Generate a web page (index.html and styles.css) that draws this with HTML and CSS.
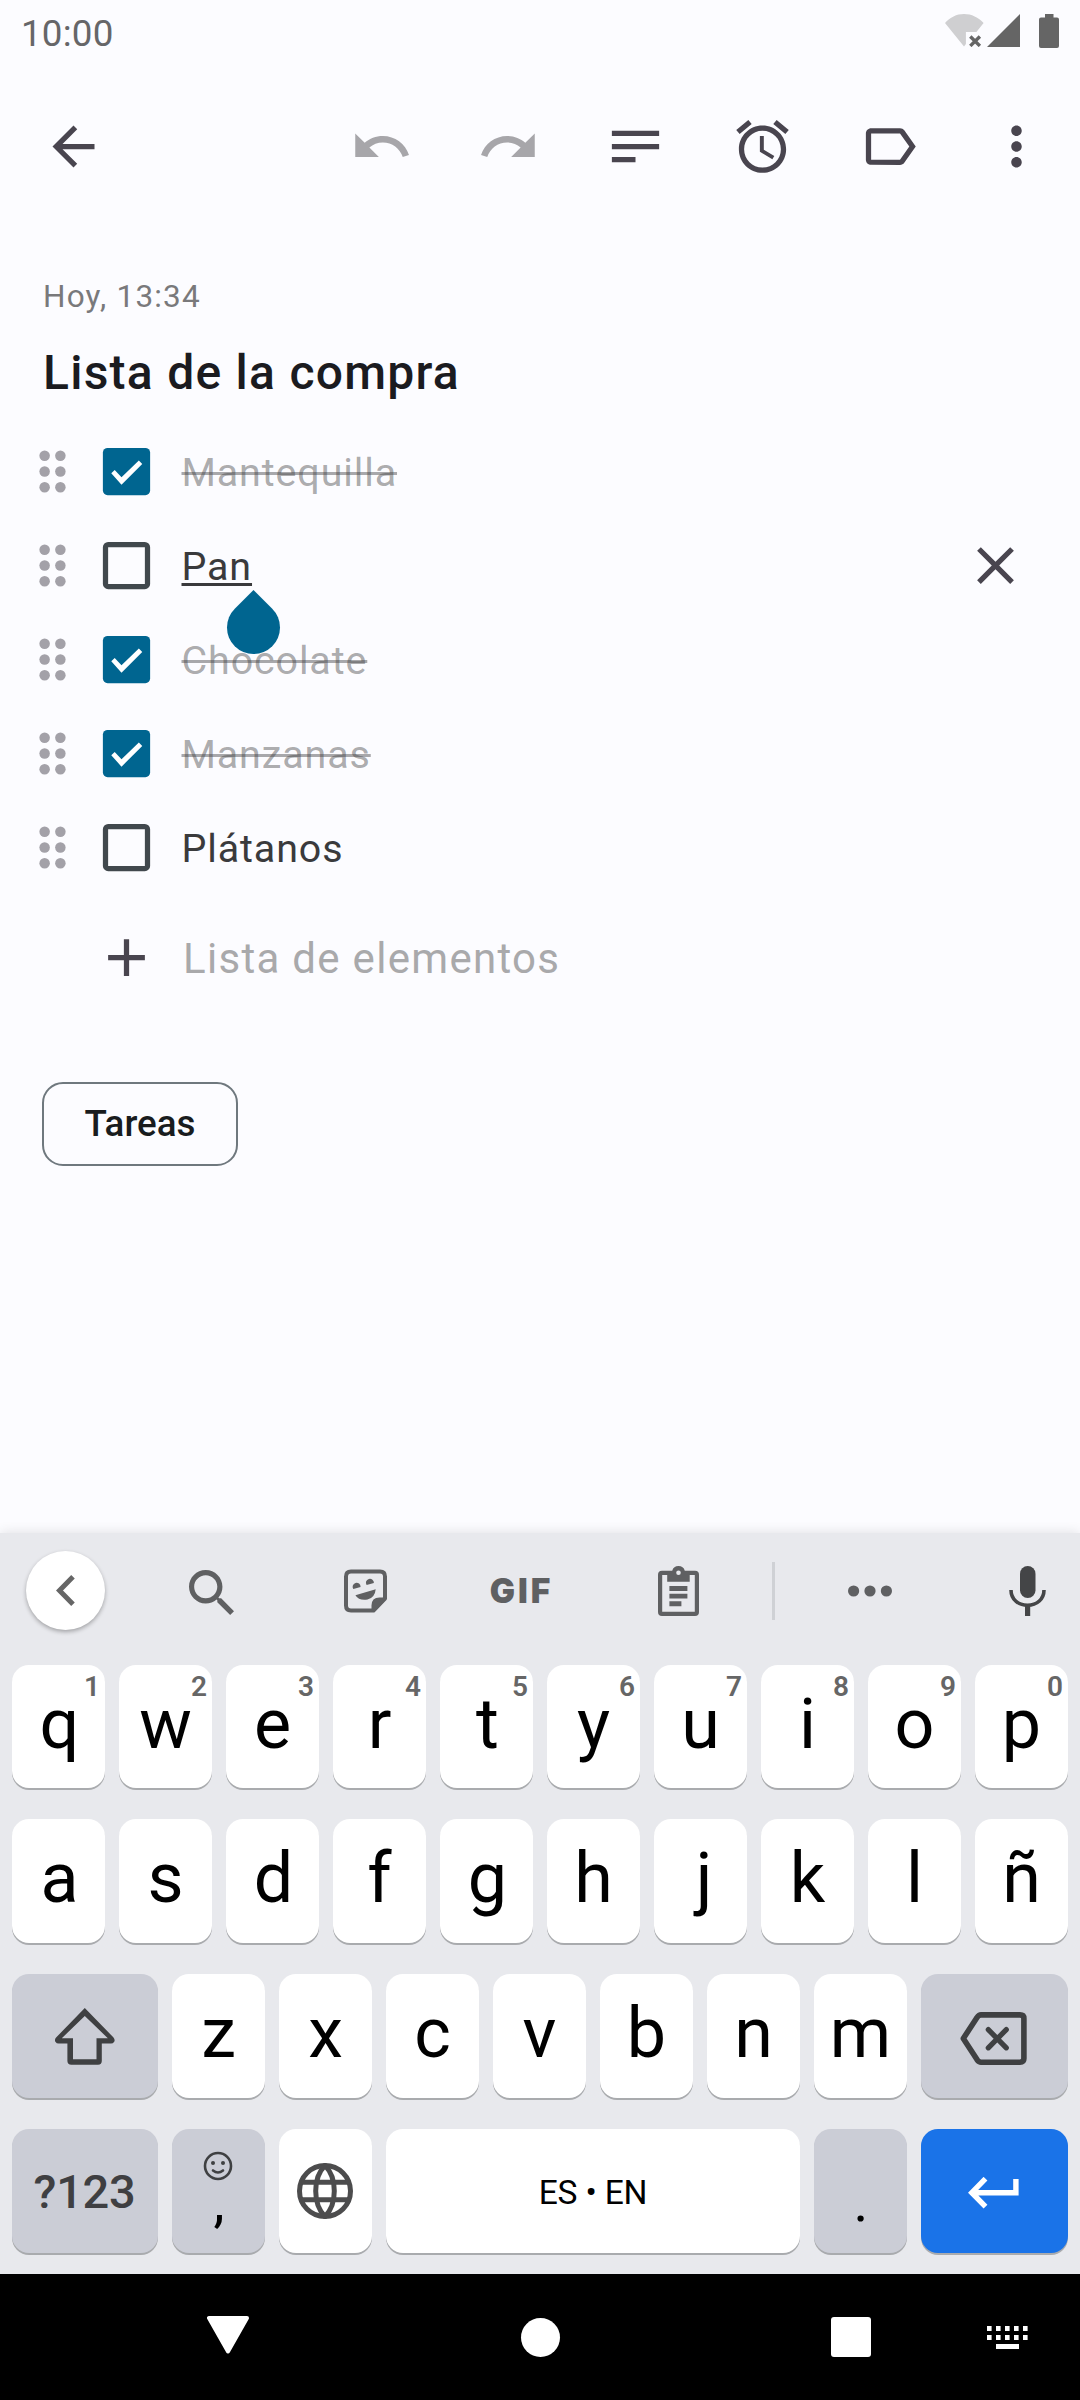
FILE: index.html
```html
<!DOCTYPE html>
<html lang="es">
<head>
<meta charset="utf-8">
<title>Lista de la compra</title>
<link rel="stylesheet" href="styles.css">
</head>
<body>
<svg class="defs" width="0" height="0">
  <symbol id="drag" viewBox="0 0 24 24"><circle cx="9" cy="6" r="2"/><circle cx="15" cy="6" r="2"/><circle cx="9" cy="12" r="2"/><circle cx="15" cy="12" r="2"/><circle cx="9" cy="18" r="2"/><circle cx="15" cy="18" r="2"/></symbol>
  <symbol id="box-on" viewBox="0 0 24 24"><rect x="3" y="3" width="18" height="18" rx="1.8" fill="#006590"/><path fill="#fff" d="M6.2 12.7 7.5 11.4 10.1 14.2 16.7 7.85 18 9.1 10.1 17Z"/></symbol>
  <symbol id="box-off" viewBox="0 0 24 24"><rect x="4" y="4" width="16" height="16" rx="1" fill="none" stroke="#41484d" stroke-width="2"/></symbol>
</svg>
<div class="screen">
  <header class="status">
    <span class="clock">10:00</span>
    <div class="status-icons">
      <svg class="wifi" width="39" height="33" viewBox="0 0 39 33"><path fill="#cfcfd1" d="M19 0C11.5 0 5 3.4 0 9L19 32.6 20.9 30V18H31.4L38.6 9C33.5 3.4 26.5 0 19 0Z"/><path stroke="#656565" stroke-width="3.4" d="M25.3 22.5l9.6 9.4m0-9.4l-9.6 9.4"/></svg>
      <svg class="signal" width="33" height="33" viewBox="0 0 33 33"><path fill="#656565" d="M33 0V33H0Z"/></svg>
      <svg class="battery" width="20" height="34" viewBox="0 0 20 34"><path fill="#656565" d="M6 0h8.500v3.400H18a2 2 0 0 1 2 2V32a2 2 0 0 1-2 2H2a2 2 0 0 1-2-2V5.400a2 2 0 0 1 2-2h4Z"/></svg>
    </div>
  </header>

  <nav class="toolbar">
    <span class="back"><svg class="icon" viewBox="0 0 24 24"><path d="M20 11H7.830l5.590-5.590L12 4l-8 8 8 8 1.410-1.410L7.830 13H20v-2z"/></svg></span>
    <div class="actions">
      <svg class="icon off" viewBox="0 0 24 24"><path d="M12.500 8c-2.650 0-5.050.990-6.900 2.600L2 7v9h9l-3.620-3.620c1.390-1.160 3.160-1.880 5.120-1.880 3.540 0 6.550 2.310 7.600 5.500l2.370-.780C21.080 11.030 17.150 8 12.500 8z"/></svg>
      <svg class="icon off" viewBox="0 0 24 24"><path d="M18.400 10.600C16.550 8.990 14.150 8 11.500 8c-4.650 0-8.580 3.030-9.960 7.220L3.900 16c1.050-3.190 4.050-5.500 7.600-5.500 1.950 0 3.730.720 5.120 1.880L13 16h9V7l-3.600 3.600z"/></svg>
      <svg class="icon" viewBox="0 0 24 24"><path d="M3 18h9v-2H3v2zM3 6v2h18V6H3zm0 7h18v-2H3v2z"/></svg>
      <svg class="icon" viewBox="0 0 24 24"><path d="M22 5.720l-4.600-3.860-1.290 1.530 4.600 3.860L22 5.720zM7.880 3.390L6.600 1.860 2 5.710l1.290 1.530 4.590-3.850zM12.500 8H11v6l4.750 2.850.750-1.230-4-2.370V8zM12 4c-4.970 0-9 4.030-9 9s4.020 9 9 9c4.970 0 9-4.030 9-9s-4.030-9-9-9zm0 16c-3.870 0-7-3.130-7-7s3.130-7 7-7 7 3.130 7 7-3.130 7-7 7z"/></svg>
      <svg class="icon" viewBox="0 0 24 24"><path d="M17.630 5.840C17.270 5.330 16.670 5 16 5L5 5.010C3.900 5.010 3 5.900 3 7v10c0 1.100.900 1.990 2 1.990L16 19c.670 0 1.270-.330 1.630-.840L22 12l-4.370-6.160zM16 17H5V7h11l3.550 5L16 17z"/></svg>
      <svg class="icon" viewBox="0 0 24 24"><path d="M12 8c1.100 0 2-.900 2-2s-.900-2-2-2-2 .900-2 2 .900 2 2 2zm0 2c-1.100 0-2 .900-2 2s.900 2 2 2 2-.900 2-2-.900-2-2-2zm0 6c-1.100 0-2 .900-2 2s.900 2 2 2 2-.900 2-2-.900-2-2-2z"/></svg>
    </div>
  </nav>

  <main class="note">
    <div class="date">Hoy, 13:34</div>
    <h1 class="title">Lista de la compra</h1>
    <ul class="items">
      <li class="item"><svg class="grip"><use href="#drag"/></svg><svg class="box"><use href="#box-on"/></svg><span class="label done">Mantequilla</span></li>
      <li class="item"><svg class="grip"><use href="#drag"/></svg><svg class="box"><use href="#box-off"/></svg><span class="label active">Pan<i class="handle"></i></span><svg class="icon remove" viewBox="0 0 24 24"><path d="M19 6.410L17.590 5 12 10.590 6.410 5 5 6.410 10.590 12 5 17.590 6.410 19 12 13.410 17.590 19 19 17.590 13.410 12z"/></svg></li>
      <li class="item"><svg class="grip"><use href="#drag"/></svg><svg class="box"><use href="#box-on"/></svg><span class="label done">Chocolate</span></li>
      <li class="item"><svg class="grip"><use href="#drag"/></svg><svg class="box"><use href="#box-on"/></svg><span class="label done">Manzanas</span></li>
      <li class="item"><svg class="grip"><use href="#drag"/></svg><svg class="box"><use href="#box-off"/></svg><span class="label">Plátanos</span></li>
    </ul>
    <div class="add"><svg class="icon" viewBox="0 0 24 24"><path d="M19 13h-6v6h-2v-6H5v-2h6V5h2v6h6v2z"/></svg><span class="hint">Lista de elementos</span></div>
    <span class="chip">Tareas</span>
  </main>

  <section class="keyboard">
    <div class="tools">
      <span class="collapse"><svg width="19" height="31" viewBox="0 0 19 31"><path fill="none" stroke="#666" stroke-width="5" d="M17 1.800 3.500 15.500 17 29.200"/></svg></span>
      <svg class="search" width="45" height="45" viewBox="3 3 17.490 17.490"><path fill="#5f6062" d="M15.500 14h-.790l-.280-.270C15.410 12.590 16 11.110 16 9.500 16 5.910 13.090 3 9.500 3S3 5.910 3 9.500 5.910 16 9.500 16c1.610 0 3.090-.590 4.230-1.570l.270.280v.790l5 4.990L20.490 19l-4.990-5zm-6 0C7.010 14 5 11.990 5 9.500S7.010 5 9.500 5 14 7.010 14 9.500 11.990 14 9.500 14z"/></svg>
      <svg class="sticker" width="43" height="44" viewBox="0 0 43 43"><path fill="none" stroke="#5f6062" stroke-width="4" stroke-linejoin="round" d="M7 2H36Q41 2 41 7V29L29.500 41H7Q2 41 2 36V7Q2 2 7 2Z"/><g fill="#5f6062"><path d="M27.500 42V36Q27.500 28 35.500 28H42V30L30.500 42Z"/><path d="M9.300 19.500A4 4 0 1 1 16.600 17.400ZM22.600 15.500A4 4 0 1 1 29.900 13.500ZM11.400 25.700L31.700 19.700Q31 28 23.500 30Q15 31.500 11.400 25.700Z"/></g></svg>
      <span class="gif">GIF</span>
      <svg width="41" height="50" viewBox="0 0 41 50"><g fill="#5f6062"><path fill-rule="evenodd" d="M4 4.700H14.200A6.600 6.600 0 0 1 26.800 4.700H37Q41 4.700 41 8.700V46Q41 50 37 50H4Q0 50 0 46V8.700Q0 4.700 4 4.700ZM4.200 9V45.800H36.800V9H31.700V15.700H9.200V9ZM20.500 4.400A2.300 2.300 0 1 0 20.500 9A2.300 2.300 0 1 0 20.500 4.400Z"/><path d="M11.400 20h18v5h-18zM11.400 27.700h18v4.800h-18zM11.400 35.300h12v5h-12z"/></g></svg>
      <i class="divider"></i>
      <svg width="44" height="12" viewBox="0 0 44 12"><g fill="#5f6062"><circle cx="5.600" cy="6" r="5.600"/><circle cx="22" cy="6" r="5.600"/><circle cx="38.400" cy="6" r="5.600"/></g></svg>
      <svg class="mic" width="37" height="50" viewBox="0 0 37 50"><rect x="11" y="0" width="15.500" height="32" rx="7.750" fill="#444547"/><path fill="none" stroke="#444547" stroke-width="3.600" d="M2 24C2 33 9 39.300 18.500 39.300S35 33 35 24"/><path fill="#444547" d="M16 39h5.200v11H16z"/></svg>
    </div>
    <div class="keys">
      <div class="row first">
        <span class="key nudge">q<sup>1</sup></span><span class="key">w<sup>2</sup></span><span class="key">e<sup>3</sup></span><span class="key">r<sup>4</sup></span><span class="key nudge">t<sup>5</sup></span><span class="key">y<sup>6</sup></span><span class="key">u<sup>7</sup></span><span class="key">i<sup>8</sup></span><span class="key">o<sup>9</sup></span><span class="key">p<sup>0</sup></span>
      </div>
      <div class="row">
        <span class="key nudge">a</span><span class="key">s</span><span class="key nudge">d</span><span class="key">f</span><span class="key nudge">g</span><span class="key">h</span><span class="key descend">j</span><span class="key">k</span><span class="key">l</span><span class="key">ñ</span>
      </div>
      <div class="row">
        <span class="key wide grey pic"><svg width="60" height="57" viewBox="0 0 60 57"><path fill="#3f4042" fill-rule="evenodd" d="M29.800 0L58.500 29.500Q60.500 32 59 34Q58 35.600 56 35.600H46.800V53Q46.800 56.700 43 56.700H16.400Q12.400 56.700 12.400 53V35.600H3.600Q1.500 35.600.6 34Q-.9 32 1.100 29.500ZM29.800 8L6.800 30.200H18V51.300H41.500V30.200H52.800Z"/></svg></span>
        <span class="key">z</span><span class="key">x</span><span class="key">c</span><span class="key">v</span><span class="key">b</span><span class="key">n</span><span class="key">m</span>
        <span class="key wide last grey pic"><svg width="67" height="53" viewBox="0 0 67 53"><g fill="none" stroke="#3f4042" stroke-linejoin="round"><path stroke-width="5.600" d="M3.300 26.500L17 5.500Q18.800 2.900 21 2.900H60Q63.900 2.900 63.900 6.500V46.600Q63.900 50.200 60 50.200H21Q18.800 50.200 17 47.600Z"/><path stroke-width="5.200" stroke-linecap="round" d="M28.300 17.600L46.300 35.800M46.300 17.600L28.300 35.800"/></g></svg></span>
      </div>
      <div class="row">
        <span class="key wide grey mode">?123</span>
        <span class="key grey punct comma"><svg class="smile" width="30" height="30" viewBox="0 0 30 30"><g fill="none" stroke="#3f4042" stroke-width="2.600"><circle cx="15" cy="15" r="13"/><path stroke-linecap="round" d="M10 19.500Q15 23.500 20 19.500"/></g><circle cx="10" cy="12" r="2" fill="#3f4042"/><circle cx="20" cy="12" r="2" fill="#3f4042"/></svg>,</span>
        <span class="key pic globe"><svg width="56" height="56" viewBox="0 0 56 56"><g fill="none" stroke="#4c4c4d" stroke-width="5"><circle cx="28" cy="28" r="25.500"/><path d="M28 2.500C20.500 10 18.700 20 18.700 28S20.500 46 28 53.500C35.500 46 37.300 36 37.300 28S35.500 10 28 2.500ZM4.500 19.300H51.500M4.500 36.700H51.500"/></g></svg></span>
        <span class="key space">ES • EN</span>
        <span class="key grey punct comma">.</span>
        <span class="key wide last enter pic"><svg width="51" height="32" viewBox="0 0 51 32"><path fill="none" stroke="#fff" stroke-width="5.400" d="M17.500 1.700L3.800 15.700 17.500 29.700M4 15.700H47.900V2"/></svg></span>
      </div>
    </div>
  </section>

  <footer class="navbar">
    <svg class="nav-back" width="42" height="38" viewBox="0 0 42 38"><path fill="#fff" stroke="#fff" stroke-width="4" stroke-linejoin="round" d="M2 2H40L21 35.500Z"/></svg>
    <i class="nav-home"></i>
    <i class="nav-recent"></i>
    <svg class="nav-ime" width="41" height="23" viewBox="0 0 41 23"><path stroke="#fff" stroke-width="5" stroke-dasharray="4.600 4.400" d="M0 2.500H41M0 11.500H41"/><path fill="#fff" d="M9 18h23v5H9z"/></svg>
  </footer>
</div>
</body>
</html>
```
FILE: styles.css
```css
* { box-sizing: border-box; }
body { margin: 0; background: #fcfcff; font-family: Roboto, "Liberation Sans", sans-serif; }
svg { display: block; flex: none; }
.defs { position: absolute; }
.screen { width: 1080px; height: 2400px; display: flex; flex-direction: column; overflow: hidden; }

.status { height: 63px; display: flex; justify-content: space-between; padding: 14px 21px 0 21px; }
.clock { font-size: 36.75px; line-height: 40px; letter-spacing: .2px; color: #666668; }
.status-icons { display: flex; }
.signal { margin-left: 3px; }
.battery { margin-left: 19px; }

.toolbar { height: 166px; display: flex; align-items: center; justify-content: space-between; padding-left: 42px; }
.icon { width: 63px; height: 63px; fill: #49454f; }
.icon.off { fill: #a7a6aa; }
.actions { display: grid; grid-template-columns: repeat(6, 127px); justify-items: center; }

.note { flex: 1; padding: 48px 42px 0; display: flex; flex-direction: column; align-items: flex-start; }
.date { padding-left: 1px; font-size: 31.5px; line-height: 40px; letter-spacing: 1.2px; color: #79797b; }
.title { margin: 26px 0 21px; padding-left: 1px; font-size: 48px; line-height: 60px; font-weight: 500; letter-spacing: 1.25px; color: #1b1b1f; }
.items { list-style: none; margin: 0; padding: 0; width: 100%; }
.item { height: 94px; display: flex; align-items: center; margin-left: -21px; }
.grip, .box { width: 63px; height: 63px; fill: #a3a1a8; }
.box { margin-left: 10.500px; }
.label { position: relative; margin-left: 24px; padding-top: 3px; font-size: 39.4px; line-height: 50px; letter-spacing: .9px; color: #3a3a3c; }
.label.done { color: rgba(58, 58, 60, .43); text-decoration: line-through 2.500px; }
.label.active { text-decoration: underline 2.500px; text-underline-offset: 3px; }
.handle { position: absolute; left: 45px; top: 62px; width: 53px; height: 53px; border-radius: 0 50% 50% 50%; background: #006590; transform: rotate(45deg); z-index: 2; }
.remove { margin-left: auto; margin-right: 11px; }
.add { height: 127px; display: flex; align-items: center; padding-left: 53px; }
.hint { margin-left: 25px; padding-top: 2px; font-size: 42px; letter-spacing: 1.3px; color: #a9a9ab; }
.chip { margin-top: 61px; width: 196px; height: 84px; padding-bottom: 2px; border: 2.600px solid #6f787e; border-radius: 21px; display: flex; align-items: center; justify-content: center; font-size: 36.75px; font-weight: 500; color: #191c1e; }

.keyboard { height: 741px; background: #e8e9ed; box-shadow: 0 0 12px rgba(0, 0, 0, .12); }
.tools { height: 132px; padding-bottom: 17px; display: grid; grid-template-columns: 131px 160px 150px 158px 158px 33px 160px 130px; align-items: center; justify-items: center; }
.collapse { width: 79px; height: 79px; border-radius: 50%; background: #fff; box-shadow: 0 2px 4px rgba(0, 0, 0, .3); display: flex; align-items: center; justify-content: center; }
.search { margin-top: 3px; }
.sticker { margin-right: 1px; }
.gif { padding-left: 3px; font-family: Inter, Roboto, sans-serif; font-weight: 900; font-size: 33.5px; line-height: 40px; letter-spacing: 3px; color: #5f6062; }
.divider { width: 3px; height: 58px; background: #cfd1d5; }
.mic { margin-left: 25px; }
.keys { padding: 0 12px; display: flex; flex-direction: column; gap: 31px; }
.row { display: flex; gap: 14px; height: 124px; }
.row.first { height: 123px; }
.key { position: relative; width: 93px; border-radius: 17px; background: #fff; box-shadow: 0 2px 0 #a9abae; font-size: 70px; line-height: 118px; text-align: center; color: #000; }
.key sup { position: absolute; top: 6px; right: 5px; font-size: 28px; line-height: 32px; font-weight: 600; color: #666; }
.nudge { padding-left: 2px; }
.descend { padding-left: 7px; }
.wide { width: 146px; }
.wide.last { width: 147px; padding-right: 2px; padding-top: 4px; }
.grey { background: #cbcdd6; }
.pic { display: flex; align-items: center; justify-content: center; }
.globe { padding-right: 2px; }
.mode { padding-right: 1px; font-size: 47px; line-height: 126px; font-weight: 500; letter-spacing: -.3px; color: #3f3f42; }
.punct { font-size: 56px; line-height: 147px; }
.comma { padding-left: 1px; }
.smile { position: absolute; left: 31px; top: 22px; }
.space { width: 414px; font-size: 33.6px; line-height: 127px; letter-spacing: -.2px; }
.wide.enter { background: #1a73e8; padding-top: 3px; }

.navbar { height: 126px; background: #000; display: flex; align-items: center; padding-left: 207px; }
.nav-back { margin-top: -5px; }
.nav-home { width: 39px; height: 39px; border-radius: 50%; background: #fff; margin-left: 271.500px; }
.nav-recent { width: 40px; height: 40px; border-radius: 3px; background: #fff; margin-left: 271.500px; }
.nav-ime { margin-left: 116px; }
```
